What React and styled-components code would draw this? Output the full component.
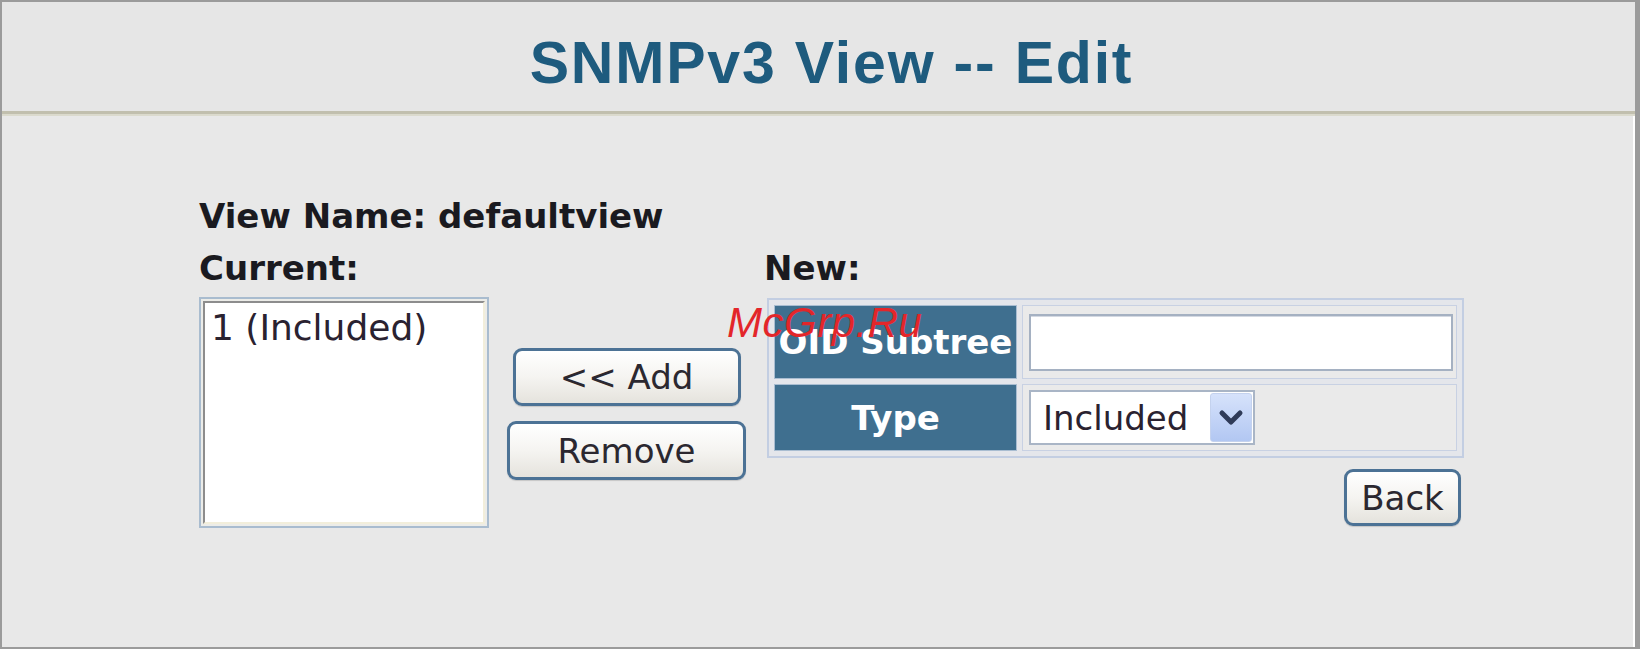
import React from 'react'
import styled, { createGlobalStyle } from 'styled-components'

const GlobalStyle = createGlobalStyle`
  html, body {
    margin: 0;
    padding: 0;
    background: #e8e8e8;
  }
  body {
    font-family: "DejaVu Sans", Verdana, sans-serif;
    color: #222;
  }
  * {
    box-sizing: border-box;
  }
`

const Frame = styled.div`
  position: relative;
  width: 1640px;
  height: 649px;
  border: 2px solid #9b9b9b;
  border-right-width: 5px;
  box-shadow: inset -2px 0 0 #fff;
  background: #e8e8e8;
  overflow: hidden;
`

const Header = styled.header`
  height: 112px;
  padding: 32px 0 0 26px;
  border-bottom: 3px solid #c1bfae;
  box-shadow: 0 2px 0 #dbdacd;
  text-align: center;
  background: #e6e6e6;
`

const Title = styled.h1`
  margin: 0;
  font-family: "Liberation Sans", Arial, sans-serif;
  font-weight: 700;
  font-size: 59px;
  line-height: 1;
  letter-spacing: 1.8px;
  color: #1e5b7e;
`

const Content = styled.main`
  padding: 82px 0 0 197px;
`

const Label = styled.div`
  margin: 0 0 ${p => p.$mb || 0}px;
  font-weight: 700;
  font-size: 34px;
  line-height: 40px;
  color: #1a1a20;
`

const Layout = styled.div`
  display: grid;
  grid-template-columns: 290px 275px 700px;
  row-gap: 9px;
`

const ListFrame = styled.div`
  width: 290px;
  height: 231px;
  border: 2px solid #a9bccf;
  padding: 2px;
  background: #ecece8;
`

const ListInner = styled.div`
  height: 100%;
  border: 2px solid;
  border-color: #8d8d8d #f2eedb #f2eedb #8d8d8d;
  background: #fff;
  padding: 5px 8px 0 6px;
  font-size: 36px;
  line-height: 40px;
  color: #2a2230;
`

const ButtonColumn = styled.div`
  display: flex;
  flex-direction: column;
  align-items: center;
  gap: 15px;
  padding-top: 51px;
`

const Button = styled.button`
  width: ${p => p.$w}px;
  height: ${p => p.$h}px;
  padding: 0;
  border: 3px solid #4c7295;
  border-radius: 9px;
  background: linear-gradient(#ffffff, #f5f4f1 50%, #e5e3dd);
  box-shadow: 0 1px 1px rgba(0, 0, 0, 0.15);
  font-family: "DejaVu Sans", Verdana, sans-serif;
  font-size: 34px;
  line-height: 1;
  color: #2b2830;
`

const NewColumn = styled.div`
  display: flex;
  flex-direction: column;
`

const FormTable = styled.table`
  width: 697px;
  margin: 1px 0 0 3px;
  border-collapse: separate;
  border-spacing: 5px;
  border: 2px solid #c3cee2;
  background: #e4e6eb;
`

const HeadCell = styled.th`
  width: 243px;
  height: ${p => p.$h}px;
  padding: 0;
  border: 1px solid #a9bdd1;
  background: #3f6f8f;
  color: #fff;
  font-weight: 700;
  font-size: 34px;
  text-align: center;
  white-space: nowrap;
`

const ValueCell = styled.td`
  padding: 0 0 0 6px;
  border: 1px solid #c8d1e3;
  background: #eaeaea;
  vertical-align: middle;
`

const TextInput = styled.input`
  display: block;
  width: 424px;
  height: 57px;
  border: 2px solid #a5b1c2;
  box-shadow: inset 0 1px 0 #d4d9e2;
  background: #fff;
  font-family: "DejaVu Sans", Verdana, sans-serif;
  font-size: 30px;
  outline: none;
`

const SelectBox = styled.div`
  display: flex;
  align-items: center;
  width: 226px;
  height: 55px;
  padding: 1px;
  border: 2px solid #a9b5c6;
  background: #fff;
`

const SelectValue = styled.span`
  flex: 1;
  padding-left: 11px;
  font-size: 34px;
  color: #2a2230;
`

const SelectArrow = styled.span`
  display: flex;
  flex-shrink: 0;
  align-items: center;
  justify-content: center;
  width: 42px;
  height: 100%;
  border: 1px solid #c4d2ee;
  border-radius: 3px;
  background: linear-gradient(#d6e2fb, #b2c7f2);

  svg {
    flex-shrink: 0;
  }
`

const BackRow = styled.div`
  display: flex;
  justify-content: flex-end;
  margin-top: 11px;
  padding-right: 3px;
`

const Watermark = styled.span`
  position: absolute;
  left: 725px;
  top: 300px;
  font-family: "Liberation Sans", Arial, sans-serif;
  font-style: italic;
  font-size: 42px;
  line-height: 1;
  letter-spacing: 0.5px;
  color: #e3262a;
  pointer-events: none;
`

function Chevron() {
  return (
    <svg width="26" height="18" viewBox="0 0 26 18">
      <polyline points="4,4 13,13 22,4" fill="none" stroke="#2f3b58" strokeWidth="5" strokeLinecap="round" strokeLinejoin="round" />
    </svg>
  )
}

export default function App() {
  return (
    <>
      <GlobalStyle />
      <Frame>
        <Header>
          <Title>SNMPv3 View -- Edit</Title>
        </Header>
        <Content>
          <Label $mb={12}>View Name: defaultview</Label>
          <Layout>
            <Label>Current:</Label>
            <div />
            <Label>New:</Label>

            <ListFrame>
              <ListInner>1 (Included)</ListInner>
            </ListFrame>

            <ButtonColumn>
              <Button $w={228} $h={58}>&lt;&lt; Add</Button>
              <Button $w={239} $h={59}>Remove</Button>
            </ButtonColumn>

            <NewColumn>
              <FormTable>
                <tbody>
                  <tr>
                    <HeadCell $h={74}>OID Subtree</HeadCell>
                    <ValueCell>
                      <TextInput type="text" />
                    </ValueCell>
                  </tr>
                  <tr>
                    <HeadCell $h={67}>Type</HeadCell>
                    <ValueCell>
                      <SelectBox>
                        <SelectValue>Included</SelectValue>
                        <SelectArrow>
                          <Chevron />
                        </SelectArrow>
                      </SelectBox>
                    </ValueCell>
                  </tr>
                </tbody>
              </FormTable>
              <BackRow>
                <Button $w={117} $h={57}>Back</Button>
              </BackRow>
            </NewColumn>
          </Layout>
        </Content>
        <Watermark>McGrp.Ru</Watermark>
      </Frame>
    </>
  )
}
